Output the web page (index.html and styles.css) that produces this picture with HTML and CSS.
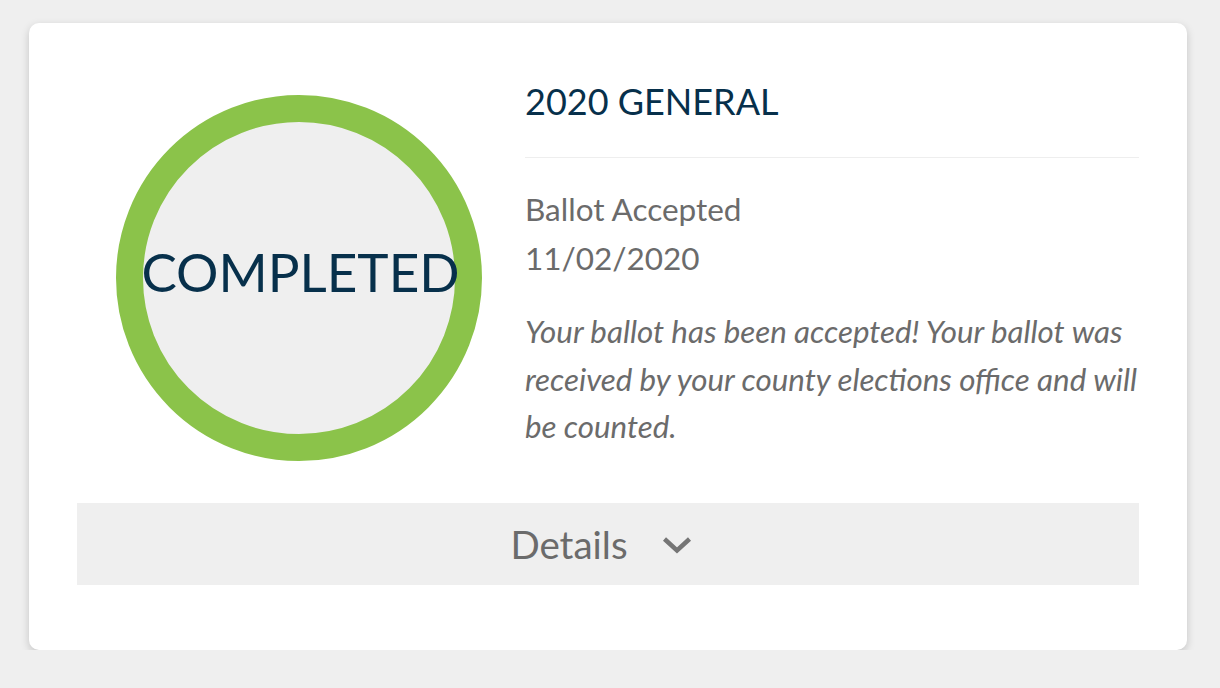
FILE: index.html
```html
<!DOCTYPE html>
<html lang="en">
<head>
<meta charset="utf-8">
<title>Ballot status</title>
<link rel="stylesheet" href="styles.css">
</head>
<body>
<main class="page">
  <section class="card">
    <div class="row">
      <div class="status-col">
        <div class="status-ring">
          <span class="status-label">COMPLETED</span>
        </div>
      </div>
      <div class="info-col">
        <h2 class="election-title">2020 GENERAL</h2>
        <div class="status-name">Ballot Accepted</div>
        <div class="status-date">11/02/2020</div>
        <p class="status-desc">Your ballot has been accepted! Your ballot was received by your county elections office and will be counted.</p>
      </div>
    </div>
    <button class="details-bar" type="button">
      <span class="details-text">Details</span>
      <svg class="chevron" width="30" height="18" viewBox="0 0 30 18" aria-hidden="true">
        <path d="M2.5 3 L15 14.5 L27.5 3" fill="none" stroke="#757575" stroke-width="4.5" stroke-linecap="butt" stroke-linejoin="miter"/>
      </svg>
    </button>
  </section>
</main>
</body>
</html>
```

FILE: styles.css
```css
html, body {
  margin: 0;
  padding: 0;
}
body {
  background: #efefef;
  font-family: Lato, "Open Sans", "Liberation Sans", sans-serif;
  color: #6b6b6b;
}
.page {
  padding: 23px 33px 0 29px;
}
.card {
  box-sizing: border-box;
  width: 1158px;
  height: 627px;
  background: #ffffff;
  border-radius: 10px;
  box-shadow: 0 3px 8px rgba(0, 0, 0, 0.18);
  padding: 57px 48px 64px 48px;
  display: flex;
  flex-direction: column;
}
.row {
  display: grid;
  grid-template-columns: 448px 1fr;
  align-items: start;
}
.status-col {
  display: flex;
  justify-content: center;
  padding-top: 15px;
  padding-right: 4px;
}
.status-ring {
  box-sizing: border-box;
  width: 366px;
  height: 366px;
  border-radius: 50%;
  border: 27px solid #8bc34a;
  background: #efefef;
  display: flex;
  align-items: center;
  justify-content: center;
  padding-bottom: 12px;
  overflow: visible;
}
.status-label {
  font-size: 53px;
  line-height: 1.2;
  color: #07304b;
  white-space: nowrap;
  margin-left: 3px;
}
.info-col {
  display: flex;
  flex-direction: column;
}
.election-title {
  margin: 0;
  font-size: 36px;
  font-weight: 400;
  line-height: 43px;
  color: #07304b;
  padding-bottom: 34px;
  border-bottom: 1px solid #eeeeee;
  margin-bottom: 27px;
}
.status-name,
.status-date {
  font-size: 31.5px;
  line-height: 48px;
  color: #6b6b6b;
}
.status-date {
  margin-top: 1px;
}
.status-desc {
  margin: 26px 0 0 0;
  font-size: 31.3px;
  line-height: 47.5px;
  font-style: italic;
  color: #6b6b6b;
}
.details-bar {
  margin-top: 42px;
  height: 82px;
  width: 100%;
  border: 0;
  background: #efefef;
  display: flex;
  align-items: center;
  justify-content: center;
  gap: 34px;
  font-family: inherit;
  padding: 0;
  cursor: pointer;
}
.details-text {
  font-size: 38.5px;
  color: #6b6b6b;
  line-height: 46px;
}
.chevron {
  margin-right: 14px;
  margin-top: 2px;
}
```
